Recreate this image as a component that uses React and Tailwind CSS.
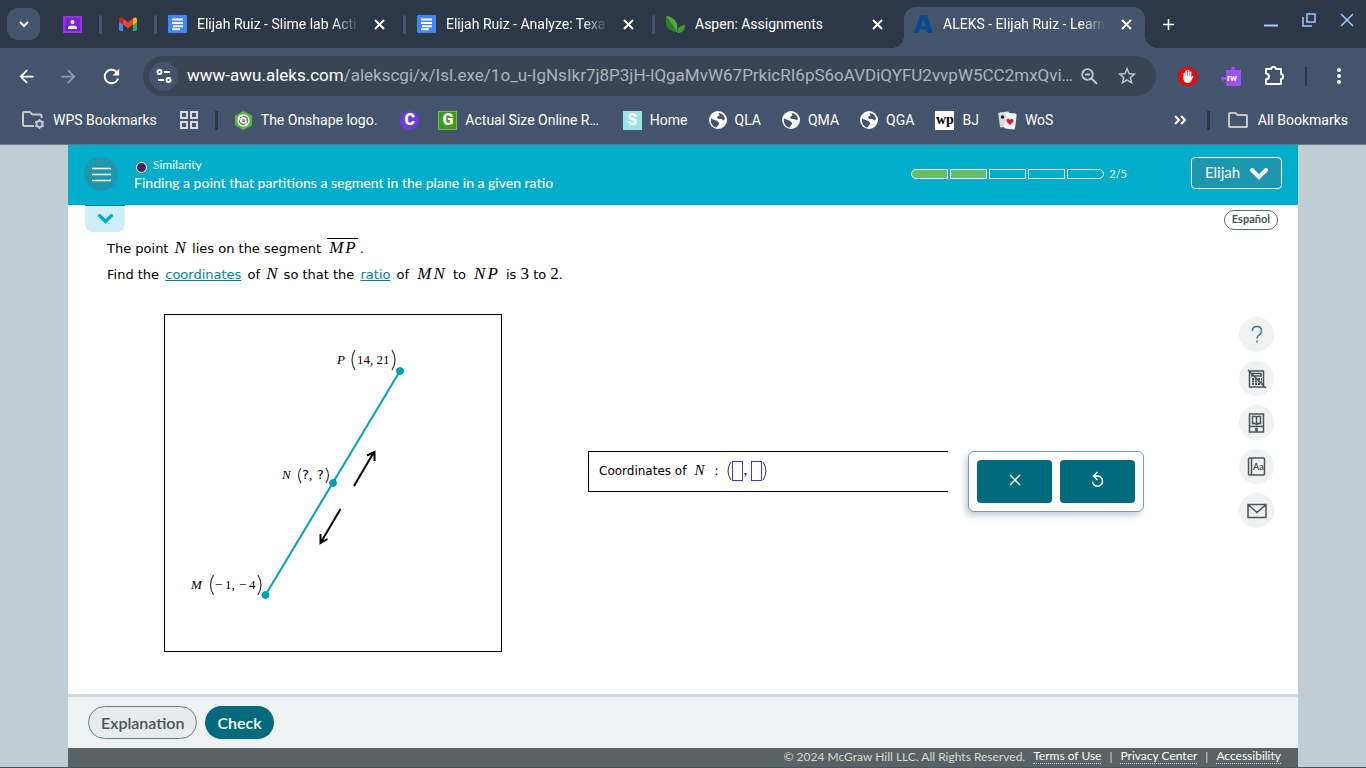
import React, { useState } from "react";
import {
  MdAdd,
  MdArrowBack,
  MdArrowForward,
  MdMoreVert,
  MdOutlineFolder,
  MdRefresh,
  MdStarBorder,
} from "react-icons/md";

const DocsIcon = () => (
  <svg viewBox="0 0 19 19" className="size-[19px] shrink-0">
    <rect y="0" width="19" height="18" rx="1" fill="#4285f4" />
    <path d="M4 4.5h11M4 7.9h11M5 11.2h10M4 14.3h8" stroke="#fff" strokeWidth="2" />
  </svg>
);

const LeafIcon = () => (
  <svg viewBox="0 0 19 19" className="size-[19px] shrink-0">
    <path d="M0 .5C6 2 10 5 11 9c1 3 0 6 0 8C5 16 0 13 0 8z" fill="#55a63a" />
    <path d="M0 .5C4 6 7 10 11 17 5 16 0 13 0 8z" fill="#2f7d2c" />
    <path d="M19 9.500c0 5-2 9-8 8.500 0-5 3-7 8-8.500z" fill="#3f9636" />
  </svg>
);

const AleksIcon = () => (
  <svg viewBox="0 0 19 19" className="size-[19px] shrink-0" fill="#084a8e">
    <path fillRule="evenodd" d="M6 0h7L19 18h-5.500l-1.200-3.500H6L4.600 18H0zM9.400 5 7.300 11h4.100z" />
  </svg>
);

const GlobeIcon = () => (
  <svg viewBox="0 0 18 18" className="size-[18px] shrink-0">
    <circle cx="9" cy="9" r="9" fill="#fff" />
    <path d="M2 7.500l5 2c2 0 1.500 2 3 2.200V13l-2.500 3.500C3.500 16 1.300 12 2 7.500zM9.500 2c3.500 0 6 3 6.500 6l-1.500 1.500L12.500 8H9.500L8 6.500 9 5h1.500z" fill="#44546c" />
  </svg>
);

const OnshapeIcon = () => (
  <svg viewBox="0 0 19 19" className="size-[19px] shrink-0">
    <path d="M9.500 0 18 4.700v9.600L9.500 19 1 14.300V4.700z" fill="#55b83f" />
    <circle cx="9.500" cy="9.500" r="5.500" fill="#6a716d" stroke="#e8ece8" strokeWidth="1.500" />
    <circle cx="9.500" cy="9.500" r="2.500" fill="#8d948f" stroke="#fff" strokeWidth="1.300" />
    <path d="M7.300 10.500 4 6M11.500 8l-6-3.500M12 10v5" stroke="#fff" strokeWidth="1.300" />
  </svg>
);

const CardsIcon = () => (
  <svg viewBox="0 0 19 19" className="size-[19px] shrink-0">
    <rect x="1" y="1" width="11" height="15" rx="1.500" fill="#d9dadc" transform="rotate(-8 6 8)" />
    <rect x="7" y="2" width="11" height="16" rx="1.500" fill="#f4f4f4" transform="rotate(7 12 9)" />
    <circle cx="4.500" cy="6" r="1.800" fill="#222" />
    <path d="M12 14 8.500 10.500c-1-2.500 2-4 3.500-1.500 1.500-2 4.500-.5 3.500 1.500z" fill="#e0182d" />
  </svg>
);

const FolderGearIcon = () => (
  <svg viewBox="0 0 23 20" className="h-5 w-[23px] shrink-0" fill="none" stroke="#c3c7ce" strokeWidth="2">
    <path d="M12 16H2.500Q1 16 1 14.500V3.500Q1 2 2.500 2H8l2.500 2.500H18q1.500 0 1.500 1.500v2" />
    <circle cx="17.500" cy="14" r="3" />
    <path d="M17.500 9v2M17.500 17v2M13.200 11.500l1.700 1M20.100 15.500l1.700 1M13.200 16.500l1.700-1M20.100 12.500l1.700-1" strokeWidth="1.500" />
  </svg>
);

const CloseIcon = () => (
  <svg viewBox="0 0 15 15" className="size-[15px]" stroke="currentColor" strokeWidth="2">
    <path d="M3 3l9 9M12 3l-9 9" />
  </svg>
);

const Chevron = ({ className }) => (
  <svg viewBox="0 0 18 12" className={className} fill="none" stroke="currentColor" strokeWidth="4">
    <path d="M2 2l7 7 7-7" strokeLinecap="round" />
  </svg>
);

const tabs = [
  { title: "Elijah Ruiz - Slime lab Acti", icon: <DocsIcon />, fade: true },
  { title: "Elijah Ruiz - Analyze: Texa", icon: <DocsIcon />, fade: true },
  { title: "Aspen: Assignments", icon: <LeafIcon />, fade: false },
];

const fadeMask = "[mask-image:linear-gradient(to_right,black_84%,transparent)]";

const TabStrip = () => (
  <div className="flex h-12 items-center bg-[#2c3747] text-white">
    <button aria-label="Search tabs" className="ml-[7px] grid h-8 w-[33px] shrink-0 place-items-center rounded-[11px] bg-[#44546c]">
      <svg viewBox="0 0 10 7" className="h-[7px] w-[10px]" fill="none" stroke="#fff" strokeWidth="2">
        <path d="M1 1l4 4 4-4" />
      </svg>
    </button>
    <button aria-label="Google Classroom" className="ml-[23px] shrink-0">
      <svg viewBox="0 0 19 17" className="h-[17px] w-[19px]">
        <rect width="19" height="17" fill="#9334e6" />
        <rect x="2" y="2" width="15" height="13" fill="#7b22cf" />
        <circle cx="9.500" cy="6" r="2" fill="#fff" />
        <path d="M5 13v-1.500Q5.500 9.500 9.500 9.500T14 11.500V13z" fill="#fff" />
      </svg>
    </button>
    <span className="ml-[17px] h-[19px] w-[3px] shrink-0 rounded bg-[#44546c]" />
    <button aria-label="Gmail" className="ml-[17px] shrink-0">
      <svg viewBox="0 0 18 14" className="h-[14px] w-[18px]">
        <path d="M0 2h4v12H1.500Q0 14 0 12.500z" fill="#4285f4" />
        <path d="M14 2h4v10.500q0 1.500-1.500 1.500H14z" fill="#34a853" />
        <path d="M14 1.500Q16 0 17.500 1q.5.500.5 1.500V5l-4 3z" fill="#fbbc04" />
        <path d="M4 1.500 9 5.300l5-3.800V7.500l-5 3.800-5-3.800z" fill="#ea4335" />
        <path d="M0 2.500Q0 0 2 0q1 0 2 1.500v6L0 5z" fill="#c5221f" />
      </svg>
    </button>
    <div className="ml-[17px] flex min-w-0">
      {tabs.map((tab) => (
        <div key={tab.title} className="flex w-[249px] min-w-0 items-center">
          <span className="h-[19px] w-[3px] shrink-0 rounded bg-[#44546c]" />
          <span className="ml-[11px] shrink-0">{tab.icon}</span>
          <span className={`ml-[10px] min-w-0 flex-1 overflow-hidden text-[14px] whitespace-nowrap ${tab.fade ? fadeMask : ""}`}>
            {tab.title}
          </span>
          <button aria-label="Close tab" className="mr-4 ml-[13px] shrink-0">
            <CloseIcon />
          </button>
        </div>
      ))}
    </div>
    <div className="relative ml-[3px] flex h-[41px] w-[241px] min-w-0 items-center self-end rounded-t-xl bg-[#44546c] pb-[7px]">
      <span className="absolute bottom-0 -left-3 size-3 bg-[radial-gradient(circle_at_0_0,transparent_12px,#44546c_12px)]" />
      <span className="absolute -right-3 bottom-0 size-3 bg-[radial-gradient(circle_at_100%_0,transparent_12px,#44546c_12px)]" />
      <span className="ml-[10px] shrink-0">
        <AleksIcon />
      </span>
      <span className={`ml-[10px] min-w-0 flex-1 overflow-hidden text-[14px] whitespace-nowrap ${fadeMask}`}>
        ALEKS - Elijah Ruiz - Learn
      </span>
      <button aria-label="Close tab" className="mr-[11px] ml-[13px] shrink-0">
        <CloseIcon />
      </button>
    </div>
    <button aria-label="New tab" className="ml-[14px] shrink-0">
      <MdAdd size={19} />
    </button>
    <div className="mr-3 mb-2 ml-auto flex shrink-0 items-center gap-6 text-[#a8c7fa]">
      <button aria-label="Minimize">
        <svg viewBox="0 0 14 14" className="size-[14px]" stroke="currentColor" strokeWidth="2">
          <path d="M0 12.500h14" />
        </svg>
      </button>
      <button aria-label="Restore">
        <svg viewBox="0 0 14 14" className="size-[14px]" fill="none" stroke="currentColor" strokeWidth="1.500">
          <path d="M5 1h8v8H5zM1 4v9h9" />
        </svg>
      </button>
      <button aria-label="Close window">
        <svg viewBox="0 0 14 14" className="size-[14px]" stroke="currentColor" strokeWidth="1.500">
          <path d="M1 1l12 12M13 1L1 13" />
        </svg>
      </button>
    </div>
  </div>
);

const Toolbar = () => (
  <div className="flex h-[52px] items-center pt-1 text-white">
    <button aria-label="Back" className="ml-4 shrink-0">
      <MdArrowBack size={21} />
    </button>
    <button aria-label="Forward" className="ml-[21px] shrink-0 text-[#8f9aaa]">
      <MdArrowForward size={21} />
    </button>
    <button aria-label="Reload" className="ml-[21px] shrink-0">
      <MdRefresh size={23} />
    </button>
    <div className="ml-5 flex h-10 min-w-0 flex-1 items-center rounded-full bg-[#394555] pr-[18px] pl-[6px]">
      <button aria-label="Site information" className="grid size-[29px] shrink-0 place-items-center rounded-full bg-[#44546c]">
        <svg viewBox="0 0 16 14" className="h-[14px] w-4" fill="none" stroke="#fff" strokeWidth="2">
          <circle cx="3.500" cy="3" r="2" />
          <path d="M8 3h6M2 11h6" />
          <circle cx="12.500" cy="11" r="2" />
        </svg>
      </button>
      <span className="ml-[9px] min-w-0 flex-1 truncate text-[17px] text-[#aeb4bc]">
        <span className="text-white">www-awu.aleks.com</span>
        /alekscgi/x/Isl.exe/1o_u-IgNsIkr7j8P3jH-lQgaMvW67PrkicRI6pS6oAVDiQYFU2vvpW5CC2mxQvi…
      </span>
      <button aria-label="Zoom" className="mr-[2px] ml-1 shrink-0 text-[#c3c7ce]">
        <svg viewBox="0 0 17 17" className="size-[17px]" fill="none" stroke="currentColor" strokeWidth="1.800">
          <circle cx="6.500" cy="6.500" r="5.300" />
          <path d="M10.500 10.500l5.500 5.500M4 6.500h5" />
        </svg>
      </button>
      <button aria-label="Bookmark this tab" className="ml-4 shrink-0 text-[#c3c7ce]">
        <MdStarBorder size={22} />
      </button>
    </div>
    <button aria-label="AdBlock" className="ml-[22px] shrink-0">
      <svg viewBox="0 0 19 19" className="size-[19px]">
        <path d="M5.500 0h8L19 5.500v8L13.500 19h-8L0 13.500v-8z" fill="#e50b0b" />
        <path d="M6.300 11V6.500M8.300 9V4M10.500 9V3.500M12.500 9V5" stroke="#fff" strokeWidth="1.600" strokeLinecap="round" />
        <path d="M5.500 9h7.700v1.500l1.400-1.700 1 .7-2.800 5Q11.500 16 9.500 16q-4 0-4-5z" fill="#fff" />
      </svg>
    </button>
    <button aria-label="Read&Write" className="ml-6 shrink-0">
      <svg viewBox="0 0 20 20" className="size-5">
        <path d="M5 4h5.500a2 2 0 1 1 3 0H20v16H5v-6H3.500a2 2 0 1 1 0-3H5z" fill="#9b51f5" />
        <text x="6" y="15" fontSize="9" fontWeight="700" fill="#fff">rw</text>
      </svg>
    </button>
    <button aria-label="Extensions" className="ml-[23px] shrink-0">
      <svg viewBox="0 0 20 20" className="size-5" fill="none" stroke="#fff" strokeWidth="2">
        <path d="M2 3h5q0-2 2.500-2T12 3h5v5q2 0 2 2.500T17 13v5H2v-4.500q3-.5 3-3T2 7.500z" strokeLinejoin="round" />
      </svg>
    </button>
    <span className="ml-[21px] h-[19px] w-[2px] shrink-0 bg-[#2c3747]" />
    <button aria-label="Menu" className="mr-[15px] ml-5 shrink-0">
      <MdMoreVert size={24} />
    </button>
  </div>
);

const Bookmark = ({ icon, label, className }) => (
  <button className={`flex shrink-0 items-center gap-2 ${className}`}>
    {icon}
    <span>{label}</span>
  </button>
);

const BookmarksBar = () => (
  <div className="flex h-[45px] items-center border-b border-[#67758a] pb-1 text-[14px] text-white">
    <Bookmark icon={<FolderGearIcon />} label="WPS Bookmarks" className="ml-[22px]" />
    <button aria-label="Apps" className="ml-[23px] shrink-0">
      <svg viewBox="0 0 18 18" className="size-[18px]" fill="none" stroke="#d8dbe0" strokeWidth="2">
        <path d="M1 1h6v6H1zM11 1h6v6h-6zM1 11h6v6H1zM11 11h6v6h-6z" />
      </svg>
    </button>
    <span className="ml-[17px] h-[19px] w-[3px] shrink-0 bg-[#2c3747]" />
    <Bookmark icon={<OnshapeIcon />} label="The Onshape logo." className="ml-4" />
    <button aria-label="Clever" className="ml-[23px] grid size-[19px] shrink-0 place-items-center rounded-full bg-[#6a3ddb] text-[16px] leading-none font-black">
      C
    </button>
    <Bookmark
      icon={<span className="grid size-[19px] place-items-center border border-[#79c143] bg-[#3f9a1c] text-[16px] leading-none font-black">G</span>}
      label="Actual Size Online R…"
      className="ml-[19px]"
    />
    <Bookmark
      icon={<span className="grid size-[19px] place-items-center bg-[#98e6e3] text-[16px] leading-none font-black">S</span>}
      label="Home"
      className="ml-6"
    />
    <Bookmark icon={<GlobeIcon />} label="QLA" className="ml-[21px]" />
    <Bookmark icon={<GlobeIcon />} label="QMA" className="ml-[21px]" />
    <Bookmark icon={<GlobeIcon />} label="QGA" className="ml-[21px]" />
    <Bookmark
      icon={<span className="grid size-[19px] place-items-center bg-white font-['Liberation_Serif',serif] text-[14px] leading-none font-bold text-black">wp</span>}
      label="BJ"
      className="ml-[21px]"
    />
    <Bookmark icon={<CardsIcon />} label="WoS" className="ml-[19px]" />
    <button aria-label="More bookmarks" className="ml-auto shrink-0">
      <svg viewBox="0 0 12 10" className="h-[10px] w-3" fill="none" stroke="#fff" strokeWidth="2">
        <path d="M1 1l4 4-4 4M7 1l4 4-4 4" />
      </svg>
    </button>
    <span className="ml-[21px] h-[19px] w-[3px] shrink-0 bg-[#2c3747]" />
    <Bookmark icon={<MdOutlineFolder size={24} color="#c3c7ce" />} label="All Bookmarks" className="mr-[18px] ml-4" />
  </div>
);

const TopicHeader = () => (
  <header className="flex h-[60px] shrink-0 items-center bg-[#00adca] text-white">
    <button aria-label="Menu" className="mb-[2px] ml-4 grid size-[34px] shrink-0 place-items-center rounded-full bg-[#1e97ae]">
      <svg viewBox="0 0 19 15" className="h-[15px] w-[19px]" stroke="#fff" strokeWidth="1.500">
        <path d="M0 1.500h19M0 7.500h19M0 13.500h19" />
      </svg>
    </button>
    <div className="mb-[2px] ml-4 min-w-0">
      <div className="flex items-center gap-[6px] text-[12px] leading-[18px]">
        <span className="mt-1 ml-[2px] size-[11px] rounded-full border border-white bg-[#4d1f63]" />
        <span>Similarity</span>
      </div>
      <h1 className="truncate text-[14px] leading-[18px] font-medium">
        Finding a point that partitions a segment in the plane in a given ratio
      </h1>
    </div>
    <div className="mb-[2px] ml-auto flex shrink-0 items-center gap-[2px]">
      <span className="h-[10px] w-[37px] rounded-l-full border border-white bg-[#64bf68]" />
      <span className="h-[10px] w-[37px] border border-white bg-[#64bf68]" />
      <span className="h-[10px] w-[37px] border border-white" />
      <span className="h-[10px] w-[37px] border border-white" />
      <span className="h-[10px] w-[37px] rounded-r-full border border-white" />
      <span className="ml-[3px] text-[11px]">2/5</span>
    </div>
    <button className="mr-4 mb-1 ml-16 flex h-8 w-[91px] shrink-0 items-center justify-center gap-[10px] rounded border border-white bg-[#1e97ae] pb-[2px] text-[15px]">
      Elijah
      <Chevron className="mt-1 h-3 w-[18px]" />
    </button>
  </header>
);

const Var = ({ children }) => (
  <i className="font-['Liberation_Serif',serif] text-[17px] leading-none">{children}</i>
);

const Num = ({ children }) => (
  <span className="font-['Liberation_Serif',serif] text-[17px] leading-none">{children}</span>
);

const PointN = () => (
  <span className="mx-[2px]">
    <Var>N</Var>
  </span>
);

// two point names side by side, e.g. MN
const Segment = ({ from, to, over }) => (
  <span className={`mx-[2px] inline-flex gap-[2px] px-[2px] leading-[19px] ${over ? "border-t border-black" : ""}`}>
    <Var>{from}</Var>
    <Var>{to}</Var>
  </span>
);

const termLink = "mx-[2px] text-[#00829b] underline";

const Question = () => (
  <div className="mt-1 ml-[39px] font-['DejaVu_Sans',sans-serif] text-[13px] leading-[26px] text-black">
    <p>
      The point <PointN /> lies on the segment <Segment from="M" to="P" over />.
    </p>
    <p>
      Find the <a href="#coordinates" className={termLink}>coordinates</a> of <PointN /> so that the{" "}
      <a href="#ratio" className={termLink}>ratio</a> of <Segment from="M" to="N" /> to{" "}
      <Segment from="N" to="P" /> is <Num>3</Num> to <Num>2</Num>.
    </p>
  </div>
);

const Diagram = () => (
  <svg
    viewBox="0 0 338 338"
    className="size-[338px] shrink-0 font-['Liberation_Serif',serif] text-[13px]"
    role="img"
    aria-label="Segment MP with point N"
  >
    <rect x="0.500" y="0.500" width="337" height="337" fill="#fff" stroke="#000" />
    <g stroke="#00a0bb" fill="#00a0bb">
      <path d="M101.500 281L236 57" strokeWidth="2" />
      <circle cx="236" cy="57" r="3.500" />
      <circle cx="169" cy="169" r="3.500" />
      <circle cx="101.500" cy="281" r="3.500" />
    </g>
    <g fill="none" stroke="#000" strokeWidth="2">
      <path d="M190 172l20-34M203 141.500l7.500-3.500v9" />
      <path d="M176.500 195l-20 34M156.500 220v9l7-4" />
    </g>
    <text x="173" y="50" fontStyle="italic">P</text>
    <text x="193" y="50">14, 21</text>
    <text x="118" y="165" fontStyle="italic">N</text>
    <text x="138" y="165" className="font-['DejaVu_Sans',sans-serif]">?</text>
    <text x="145" y="165">,</text>
    <text x="153" y="165" className="font-['DejaVu_Sans',sans-serif]">?</text>
    <text x="27" y="275" fontStyle="italic">M</text>
    <text x="51" y="275">−</text>
    <text x="61" y="275">1,</text>
    <text x="75" y="275">−</text>
    <text x="85" y="275">4</text>
    <g fill="none" stroke="#333" strokeWidth="1.200">
      <path d="M191 36q-6 10 0 20M228 36q6 10 0 20" />
      <path d="M137 154q-5 7 0 15M162 154q5 7 0 15" />
      <path d="M49.500 261q-6 10 0 20M94 261q6 10 0 20" />
    </g>
  </svg>
);

const AnswerBox = () => {
  const [x, setX] = useState("");
  const [y, setY] = useState("");

  return (
    <div className="mt-[137px] ml-[86px] flex h-[41px] w-[360px] items-center border-y border-l border-black pb-[2px] pl-[10px] font-['DejaVu_Sans',sans-serif] text-[12px] text-black">
      <span>Coordinates of</span>
      <i className="ml-2 font-['Liberation_Serif',serif] text-[15px]">N</i>
      <span className="ml-[10px]">:</span>
      <svg viewBox="0 0 6 20" className="ml-2 h-5 w-[6px]" fill="none" stroke="#333">
        <path d="M5 1q-6 9 0 18" />
      </svg>
      <input
        aria-label="x coordinate of N"
        value={x}
        onChange={(e) => setX(e.target.value)}
        className="h-5 w-[11px] border border-[#3535ff] outline-none"
      />
      <span className="mr-1 font-['Liberation_Serif',serif] text-[15px]">,</span>
      <input
        aria-label="y coordinate of N"
        value={y}
        onChange={(e) => setY(e.target.value)}
        className="h-5 w-[11px] border border-[#3535ff] outline-none"
      />
      <svg viewBox="0 0 6 20" className="h-5 w-[6px]" fill="none" stroke="#333">
        <path d="M1 1q6 9 0 18" />
      </svg>
    </div>
  );
};

const Keypad = () => (
  <div className="mt-[137px] ml-5 flex shrink-0 gap-2 rounded-md border border-[#7da0a8] bg-white p-2 shadow-[-3px_4px_6px_#c4d5d9]">
    <button aria-label="Clear" className="grid h-[43px] w-[75px] place-items-center rounded bg-[#006b7d]">
      <svg viewBox="0 0 12 12" className="mb-1 size-3" stroke="#fff" strokeWidth="1.500">
        <path d="M1 1l10 10M11 1L1 11" />
      </svg>
    </button>
    <button aria-label="Undo" className="grid h-[43px] w-[75px] place-items-center rounded bg-[#006b7d]">
      <svg viewBox="0 0 14 17" className="mb-1 h-[17px] w-[14px]" fill="none" stroke="#fff" strokeWidth="1.500">
        <path d="M6.500 1L2.500 5l4 4M3 5h2.500a5 5.200 0 1 1-4 5.500" />
      </svg>
    </button>
  </div>
);

const tools = [
  {
    label: "Help",
    art: <path d="M7.500 8q0-4.500 4.500-4.500t4.500 4.500q0 2.500-2.500 4Q12 13 12 15.500M12 17.500v2" stroke="#3e7d95" strokeWidth="1.500" />,
  },
  {
    label: "Calculator unavailable",
    art: (
      <>
        <path d="M4.500 4h14v16h-14zM7 6.500h9v2.500H7zM3 3l18 18" />
        <path d="M7 12h10M7 14.500h10M7 17h10" strokeWidth="1.800" strokeDasharray="2 1" />
      </>
    ),
  },
  {
    label: "Textbook",
    art: <path d="M4.500 3h14v18h-14zM4.500 15.500h14M11.500 5.500v8M11.500 6q-2-1-4-.5v7q2-.5 4 1 2-1.500 4-1v-7q-2-.5-4 .5M10.500 18.500a1 1 0 1 0 2 0 1 1 0 1 0-2 0" />,
  },
  {
    label: "Dictionary",
    art: (
      <>
        <rect x="3.500" y="3" width="16" height="17" rx="1" />
        <path d="M6.500 3v17" />
        <text x="8" y="15" fontSize="9" fontWeight="700" fill="#4a5557" stroke="none">Aa</text>
      </>
    ),
  },
  {
    label: "Message",
    art: <path d="M3 5.500h18v13H3zM3.500 6l8.500 7.500L20.500 6" />,
  },
];

const SideTools = () => (
  <div className="mt-[3px] mr-6 ml-auto flex shrink-0 flex-col gap-[9px]">
    {tools.map((tool) => (
      <button key={tool.label} aria-label={tool.label} className="grid size-[35px] place-items-center rounded-full bg-[#f0f2f2]">
        <svg viewBox="0 0 24 24" className="size-6" fill="none" stroke="#4a5557" strokeWidth="1.500">
          {tool.art}
        </svg>
      </button>
    ))}
  </div>
);

const footerLink = "border-b border-dotted border-[#dfe3e3] leading-[14px] text-white";

const App = () => {
  return (
    <div className="flex min-h-screen flex-col bg-[#44546c] pb-px font-[Roboto,sans-serif]">
      <div className="shrink-0">
        <TabStrip />
        <Toolbar />
        <BookmarksBar />
      </div>

      <div className="flex flex-1 flex-col bg-[#c1cdd3] px-[68px] font-[Lato,sans-serif]">
        <TopicHeader />
        <main className="flex-1 bg-white">
          <div className="flex h-[27px] items-start justify-between pr-5 pl-[17px]">
            <button aria-label="Show topic details" className="grid h-[27px] w-10 place-items-center rounded-b-lg border-t border-[#00829b] bg-[#cceef4] text-[#00adca]">
              <Chevron className="h-[10px] w-[15px]" />
            </button>
            <button className="mt-[5px] h-5 rounded-full border border-[#5c6a6a] px-[7px] pb-[2px] text-[11px] leading-[16px] font-bold text-[#4a5557]">
              Español
            </button>
          </div>
          <Question />
          <div className="mt-[26px] flex items-start pl-24">
            <Diagram />
            <AnswerBox />
            <Keypad />
            <SideTools />
          </div>
        </main>
        <div className="flex h-[54px] shrink-0 items-center gap-2 border-t-3 border-[#d1dadc] bg-[#eef2f3] pl-5 text-[16px] font-semibold">
          <button className="h-[33px] rounded-full border border-[#6c7f7f] bg-[#e7ebec] px-3 text-[#4a5557]">Explanation</button>
          <button className="h-[33px] rounded-full bg-[#006b7d] px-3 text-white">Check</button>
        </div>
        <footer className="flex h-[19px] shrink-0 items-center justify-end gap-2 bg-[#5a6263] pr-[17px] pb-[2px] text-[12px] text-[#d5dada]">
          <span>© 2024 McGraw Hill LLC. All Rights Reserved.</span>
          <a href="#terms" className={footerLink}>Terms of Use</a>
          <span>|</span>
          <a href="#privacy" className={footerLink}>Privacy Center</a>
          <span>|</span>
          <a href="#accessibility" className={footerLink}>Accessibility</a>
        </footer>
      </div>
    </div>
  );
};

export default App;
